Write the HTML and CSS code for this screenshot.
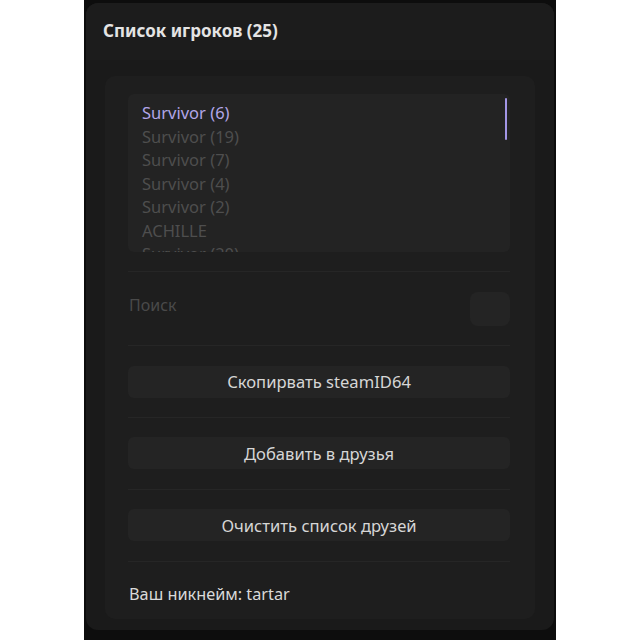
FILE: index.html
```html
<!DOCTYPE html>
<html lang="ru">
<head>
<meta charset="utf-8">
<title>Список игроков</title>
<link rel="stylesheet" href="styles.css">
</head>
<body>
<div class="frame">
  <div class="window">
    <div class="titlebar">Список игроков (25)</div>
    <div class="panel">
      <div class="list">
        <div class="item active">Survivor (6)</div>
        <div class="item">Survivor (19)</div>
        <div class="item">Survivor (7)</div>
        <div class="item">Survivor (4)</div>
        <div class="item">Survivor (2)</div>
        <div class="item">ACHILLE</div>
        <div class="item">Survivor (20)</div>
        <div class="scrollbar"></div>
      </div>
      <div class="sep"></div>
      <div class="search">
        <span class="search-label">Поиск</span>
        <span class="search-box"></span>
      </div>
      <div class="sep"></div>
      <div class="btn">Скопирвать steamID64</div>
      <div class="sep"></div>
      <div class="btn">Добавить в друзья</div>
      <div class="sep"></div>
      <div class="btn">Очистить список друзей</div>
      <div class="sep"></div>
      <div class="nick">Ваш никнейм: tartar</div>
    </div>
  </div>
</div>
</body>
</html>
```
FILE: styles.css
```css
html, body {
  margin: 0;
  padding: 0;
  background: #ffffff;
}
body {
  font-family: "Noto Sans", "Open Sans", sans-serif;
}
.frame {
  width: 472px;
  height: 640px;
  margin: 0 auto;
  background: #0d0d0d;
  padding: 3px 2px 10px;
  box-sizing: border-box;
  display: flex;
  flex-direction: column;
}
.window {
  flex: 1;
  background: #1a1a1a;
  border-radius: 12px;
  display: flex;
  flex-direction: column;
}
.titlebar {
  height: 57px;
  display: flex;
  align-items: center;
  padding-left: 17px;
  padding-bottom: 3px;
  box-sizing: border-box;
  font-size: 17px;
  font-weight: 700;
  color: #e4e4e4;
  background: #1c1c1c;
  border-radius: 12px 12px 0 0;
}
.panel {
  margin: 16px 19px 0;
  background: #1e1e1e;
  border-radius: 10px;
  padding: 18px 25px 12px 23px;
  display: flex;
  flex-direction: column;
  gap: 19.4px;
}
.list {
  position: relative;
  height: 158px;
  background: #232323;
  border-radius: 6px;
  padding: 7px 14px 0;
  box-sizing: border-box;
  overflow: hidden;
}
.item {
  font-size: 16.5px;
  line-height: 23.5px;
  color: #4e4e4e;
  white-space: nowrap;
}
.item.active {
  color: #b2a6e8;
}
.scrollbar {
  position: absolute;
  right: 3px;
  top: 4px;
  width: 2px;
  height: 42px;
  background: #a396e6;
  border-radius: 1px;
}
.sep {
  height: 1px;
  background: #262626;
}
.search {
  height: 34px;
  display: flex;
  align-items: center;
  justify-content: space-between;
}
.search-label {
  font-size: 16px;
  color: #4a4a4a;
  padding-left: 1px;
  margin-top: -8px;
}
.search-box {
  width: 40px;
  height: 34px;
  background: #242424;
  border-radius: 8px;
}
.btn {
  height: 32px;
  display: flex;
  align-items: center;
  justify-content: center;
  background: #242424;
  border-radius: 6px;
  font-size: 16.6px;
  color: #d6d6d6;
}
.nick {
  font-size: 16.3px;
  line-height: 26px;
  color: #dadada;
  padding-left: 1px;
}
```
